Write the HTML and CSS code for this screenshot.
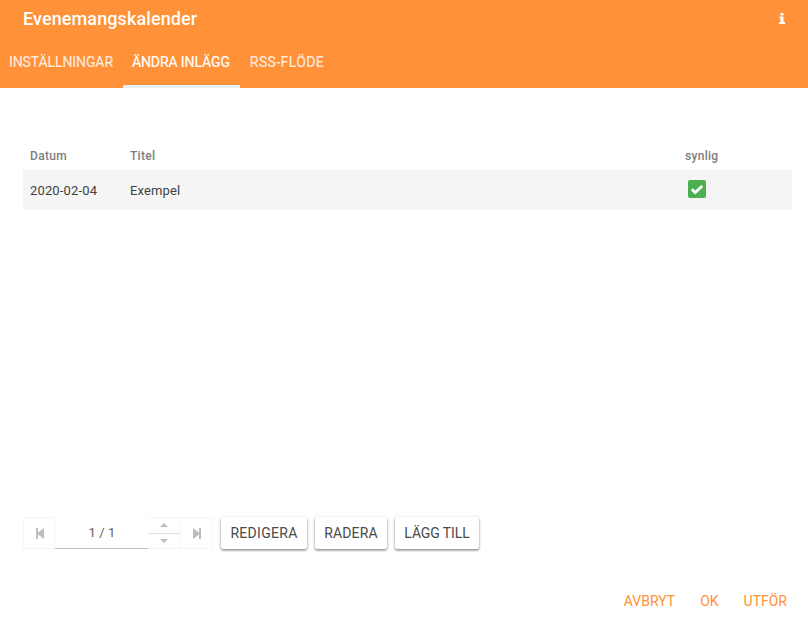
FILE: index.html
```html
<!DOCTYPE html>
<html lang="sv">
<head>
<meta charset="utf-8">
<title>Evenemangskalender</title>
<link rel="stylesheet" href="styles.css">
</head>
<body>
<div class="app">
  <header class="header">
    <div class="titlebar">
      <h1 class="title">Evenemangskalender</h1>
      <svg class="info" viewBox="0 0 6 11" width="6" height="11"><path d="M1.5 0h3v2.5h-3zM.5 3.5h4V9H6v2H0V9h1.5V5.5h-1z" fill="#fff"/></svg>
    </div>
    <nav class="tabs">
      <a class="tab">INSTÄLLNINGAR</a>
      <a class="tab active">ÄNDRA INLÄGG</a>
      <a class="tab tab-rss">RSS-FLÖDE</a>
    </nav>
  </header>
  <main class="content">
    <div class="grid">
      <div class="row head">
        <div class="c-date">Datum</div>
        <div class="c-title">Titel</div>
        <div class="c-vis">synlig</div>
      </div>
      <div class="row body">
        <div class="c-date">2020-02-04</div>
        <div class="c-title">Exempel</div>
        <div class="c-vis">
          <svg class="check" viewBox="0 0 18 18" width="18" height="18"><rect width="18" height="18" rx="2" fill="#4caf50"/><path d="M3.8 9.2l3.4 3.4 7-6.6" fill="none" stroke="#fff" stroke-width="2.8"/></svg>
        </div>
      </div>
    </div>
    <div class="toolbar">
      <div class="pager">
        <div class="pbtn pfirst"><svg viewBox="0 0 8 11" width="8" height="11"><path d="M0 0h2v4.5L8 0v11L2 6.5V11H0z" fill="#bdbdbd"/></svg></div>
        <div class="pinput">1 / 1</div>
        <div class="spin">
          <div class="spinpart up"><svg viewBox="0 0 8 4" width="8" height="4"><path d="M4 0l4 4H0z" fill="#bdbdbd"/></svg></div>
          <div class="spinpart"><svg viewBox="0 0 8 4" width="8" height="4"><path d="M0 0h8L4 4z" fill="#bdbdbd"/></svg></div>
        </div>
        <div class="pbtn plast"><svg viewBox="0 0 8 11" width="8" height="11"><path d="M8 0H6v4.5L0 0v11l6-4.5V11h2z" fill="#bdbdbd"/></svg></div>
      </div>
      <button class="btn btn-edit">REDIGERA</button>
      <button class="btn btn-delete">RADERA</button>
      <button class="btn btn-add">LÄGG TILL</button>
    </div>
  </main>
  <footer class="footer">
    <button class="link">AVBRYT</button>
    <button class="link">OK</button>
    <button class="link">UTFÖR</button>
  </footer>
</div>
</body>
</html>
```
FILE: styles.css
```css
* { box-sizing: border-box; }
html, body { margin: 0; padding: 0; }
body { font-family: Roboto, "Liberation Sans", sans-serif; background: #fff; color: #424242; }
.app { width: 808px; height: 625px; display: flex; flex-direction: column; overflow: hidden; }
.header { background: #ff9138; height: 88px; color: #fff; flex: none; }
.titlebar { height: 40px; display: flex; align-items: center; justify-content: space-between; padding: 0 23px 2px 23px; }
.title { margin: 0; font-size: 18px; font-weight: 500; line-height: 24px; letter-spacing: .1px; }
.info { margin-top: -1px; }
.tabs { display: flex; height: 48px; }
.tab { height: 48px; padding: 0 10px 0 9px; font-size: 14px; font-weight: 400; line-height: 44px; letter-spacing: -.1px; color: rgba(255,255,255,.8); border-bottom: 3px solid transparent; -webkit-text-stroke: .2px currentColor; }
.tab.active { color: #fff; border-bottom-color: #e3f0f2; }
.tab-rss { letter-spacing: .4px; padding-left: 10px; }
.content { flex: 1; padding: 52px 16px 0 23px; display: flex; flex-direction: column; justify-content: space-between; }
.row { display: flex; align-items: center; padding-left: 7px; }
.head { height: 31px; font-size: 12px; font-weight: 500; letter-spacing: .3px; color: #7d7d7d; border-bottom: 1px solid #eeeeee; padding-top: 2px; }
.body { height: 39px; background: #f5f5f5; color: #424242; font-size: 13px; letter-spacing: .15px; padding-bottom: 1px; }
.c-date { width: 100px; }
.c-title { flex: 1; }
.c-vis { width: 107px; display: flex; }
.check { margin-left: 3px; margin-top: -3px; }
.toolbar { display: flex; align-items: flex-start; gap: 8px; height: 72px; }
.pager { display: flex; height: 32px; margin-right: 1px; }
.pbtn { width: 32px; height: 32px; border: 1px solid #f5f5f5; display: flex; align-items: center; justify-content: center; padding-left: 2px; }
.pinput { width: 93px; height: 32px; border-bottom: 1px solid #bdbdbd; display: flex; align-items: center; justify-content: center; font-size: 13px; letter-spacing: .1px; padding-left: 1px; color: #616161; }
.spin { width: 32px; height: 32px; display: flex; flex-direction: column; border-top: 1px solid #f5f5f5; border-bottom: 1px solid #f5f5f5; }
.spinpart { flex: 1; display: flex; align-items: center; justify-content: center; }
.spinpart.up { border-bottom: 1px solid #e0e0e0; }
.btn { height: 32px; padding: 0; border: 0; background: #fff; border-radius: 2px; font: 400 14px Roboto, sans-serif; color: #4a4a4a; box-shadow: 0 1px 3px rgba(0,0,0,.4), 0 2px 2px rgba(0,0,0,.14); }
.btn-edit { width: 86px; letter-spacing: .3px; }
.btn-delete { width: 72px; letter-spacing: .1px; }
.btn-add { width: 84px; letter-spacing: -.1px; }
.footer { height: 36px; flex: none; display: flex; justify-content: flex-end; align-items: flex-start; gap: 25px; padding: 0 21px 0 0; }
.link { border: 0; background: none; padding: 0; font: 400 14px/24px Roboto, sans-serif; color: #ff9138; }
```
